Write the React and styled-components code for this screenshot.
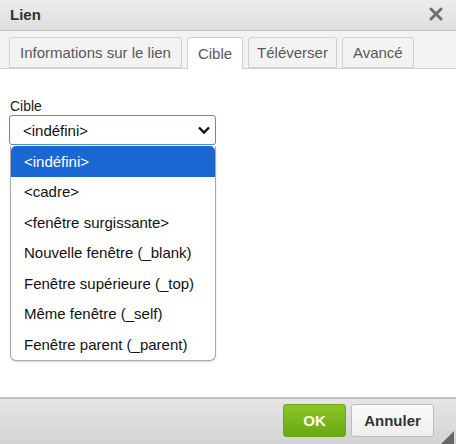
import React from "react";
import styled, { createGlobalStyle } from "styled-components";

const Global = createGlobalStyle`
  html, body { margin: 0; padding: 0; }
  body { font-family: "Liberation Sans", Arial, sans-serif; background: #fff; }
`;

const Dialog = styled.div`
  width: 456px;
  height: 444px;
  display: flex;
  flex-direction: column;
  background: #fff;
  position: relative;
  overflow: hidden;
`;

const TitleBar = styled.div`
  height: 31px;
  box-sizing: border-box;
  display: flex;
  align-items: center;
  justify-content: space-between;
  padding: 0 10px 2px 10px;
  background: linear-gradient(#ededed, #dedede);
  border-bottom: 1px solid #bdbdbd;
`;

const Title = styled.div`
  font-weight: bold;
  font-size: 15px;
  color: #333;
`;

const Close = styled.div`
  width: 14px;
  height: 14px;
  margin-right: 3px;
  display: flex;
`;

const TabBar = styled.div`
  height: 38px;
  box-sizing: border-box;
  display: flex;
  align-items: flex-end;
  gap: 5px;
  padding: 0 0 0 9px;
  background: #f3f3f3;
  border-bottom: 1px solid #d1d1d1;
`;

const Tab = styled.div`
  height: ${(p) => (p.$active ? "32px" : "31px")};
  margin-bottom: ${(p) => (p.$active ? "-1px" : "0")};
  box-sizing: border-box;
  padding: 0 ${(p) => p.$pad ?? 10}px;
  display: flex;
  align-items: center;
  font-size: 15px;
  color: #595959;
  background: ${(p) => (p.$active ? "#fff" : "#f3f3f3")};
  border: 1px solid #d1d1d1;
  border-bottom: ${(p) => (p.$active ? "none" : "1px solid #d1d1d1")};
  border-radius: 3px 3px 0 0;
`;

const Body = styled.div`
  flex: 1;
  padding: 29px 9px 0 9px;
  position: relative;
`;

const Label = styled.div`
  font-size: 14px;
  color: #222;
  padding-left: 1px;
  line-height: 16px;
  margin-bottom: 1px;
`;

const Select = styled.div`
  width: 207px;
  height: 30px;
  box-sizing: border-box;
  border: 1px solid #4a8fd9;
  border-radius: 3px;
  display: flex;
  align-items: center;
  justify-content: space-between;
  padding: 0 4px 0 13px;
  font-size: 15px;
  color: #111;
  background: #fff;
`;

const List = styled.div`
  position: absolute;
  left: 10px;
  top: 77px;
  width: 206px;
  box-sizing: border-box;
  border: 1px solid #a9a9a9;
  border-top: none;
  border-radius: 0 0 6px 6px;
  background: #fff;
  overflow: hidden;
  box-shadow: 0 1px 2px rgba(0, 0, 0, 0.15);
`;

const Option = styled.div`
  height: 30.5px;
  display: flex;
  align-items: center;
  padding-left: 13px;
  font-size: 15px;
  color: ${(p) => (p.$selected ? "#fff" : "#111")};
  background: ${(p) => (p.$selected ? "#1a66d2" : "transparent")};
  border-radius: ${(p) => (p.$selected ? "5px 5px 0 0" : "0")};
`;

const Footer = styled.div`
  height: 47px;
  box-sizing: border-box;
  border-top: 2px solid #c2c2c2;
  background: linear-gradient(#e6e6e6, #d2d3d2);
  display: flex;
  align-items: center;
  justify-content: flex-end;
  gap: 5px;
  padding: 0 22px 2px 0;
  position: relative;
`;

const Button = styled.div`
  height: 33px;
  box-sizing: border-box;
  display: flex;
  align-items: center;
  justify-content: center;
  font-weight: bold;
  font-size: 15px;
  border-radius: 3px;
  width: ${(p) => p.$w}px;
  color: ${(p) => (p.$primary ? "#fff" : "#333")};
  background: ${(p) =>
    p.$primary
      ? "linear-gradient(#8ac72a, #6aa80f)"
      : "linear-gradient(#fbfbfb, #eeeeee)"};
  border: 1px solid ${(p) => (p.$primary ? "#69a51b" : "#bcbcbc")};
`;

const Grip = styled.div`
  position: absolute;
  right: 2px;
  bottom: 0;
  width: 0;
  height: 0;
  border-left: 13px solid transparent;
  border-bottom: 13px solid #666;
`;

const options = [
  "<indéfini>",
  "<cadre>",
  "<fenêtre surgissante>",
  "Nouvelle fenêtre (_blank)",
  "Fenêtre supérieure (_top)",
  "Même fenêtre (_self)",
  "Fenêtre parent (_parent)",
];

export default function App() {
  return (
    <Dialog>
      <Global />
      <TitleBar>
        <Title>Lien</Title>
        <Close>
          <svg width="14" height="14" viewBox="0 0 14 14">
            <path d="M2 2 L12 12 M12 2 L2 12" stroke="#6f6f6f" strokeWidth="3" strokeLinecap="round" />
          </svg>
        </Close>
      </TitleBar>
      <TabBar>
        <Tab>Informations sur le lien</Tab>
        <Tab $active>Cible</Tab>
        <Tab $pad={8}>Téléverser</Tab>
        <Tab>Avancé</Tab>
      </TabBar>
      <Body>
        <Label>Cible</Label>
        <Select>
          <span>&lt;indéfini&gt;</span>
          <svg width="14" height="10" viewBox="0 0 14 10">
            <path d="M2 2.5 L7 7.5 L12 2.5" fill="none" stroke="#111" strokeWidth="2.4" />
          </svg>
        </Select>
        <List>
          {options.map((o, i) => (
            <Option key={o} $selected={i === 0}>
              {o}
            </Option>
          ))}
        </List>
      </Body>
      <Footer>
        <Button $primary $w={63}>OK</Button>
        <Button $w={83}>Annuler</Button>
        <Grip />
      </Footer>
    </Dialog>
  );
}
